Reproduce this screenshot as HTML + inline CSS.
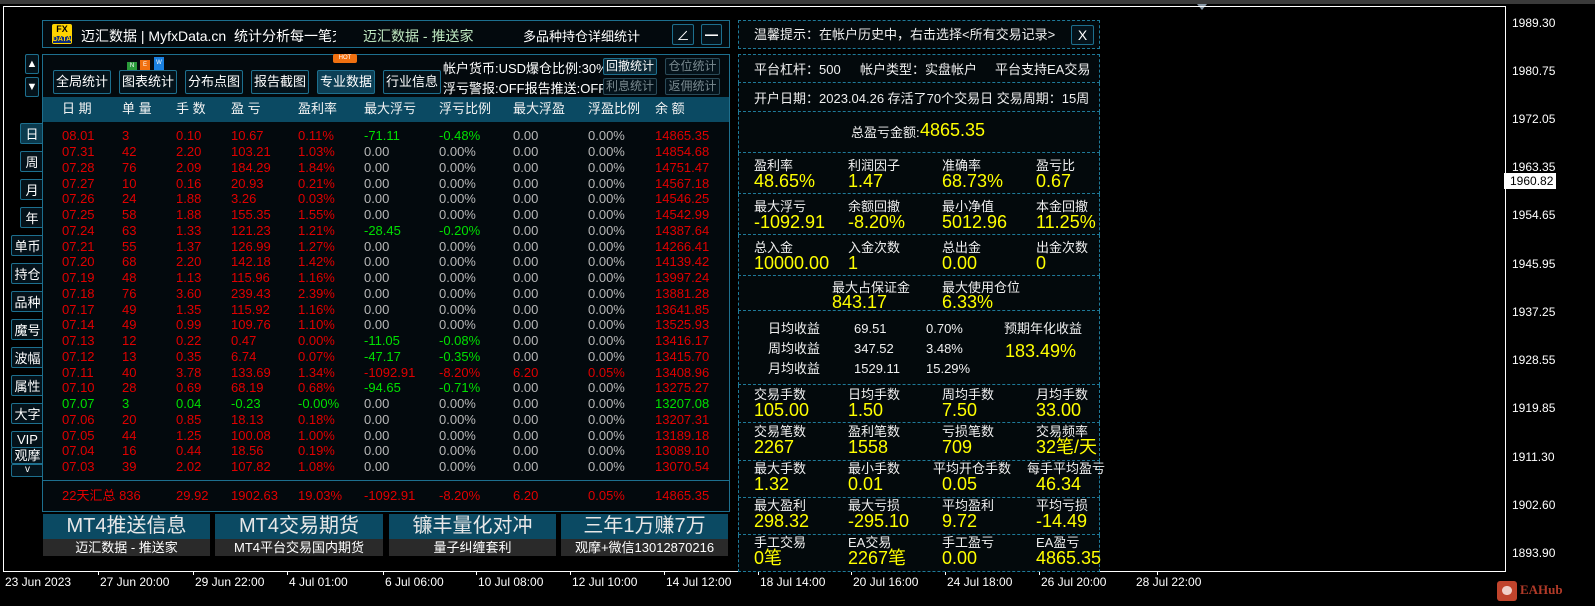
<!DOCTYPE html>
<html><head><meta charset="utf-8">
<style>
*{margin:0;padding:0;box-sizing:border-box}
body{width:1595px;height:606px;background:#000;position:relative;overflow:hidden;font-family:"Liberation Sans","Noto Sans CJK SC",sans-serif;color:#e8e8e8}
.a{position:absolute;white-space:nowrap}
.btn{position:absolute;border:1px solid #1d6f8e;border-radius:2px;background:#04121a;color:#fff;font-size:13px;text-align:center;line-height:21px}
.row{position:absolute;left:43px;width:686px;height:16px;font-size:13px;color:#e00000;line-height:16px}
.row span{position:absolute}
.row span:nth-child(1){left:19px}.row span:nth-child(2){left:79px}.row span:nth-child(3){left:133px}.row span:nth-child(4){left:188px}.row span:nth-child(5){left:255px}.row span:nth-child(6){left:321px}.row span:nth-child(7){left:396px}.row span:nth-child(8){left:470px}.row span:nth-child(9){left:545px}.row span:nth-child(10){left:612px}
.z{color:#b8b8b8}.g{color:#00e000}
.sec{position:absolute;left:738px;width:362px;border:1px dashed #1f7a99;border-top:none;background:#03090c}
.l{position:absolute;font-size:13px;color:#f0f0f0;white-space:nowrap;line-height:15px}
.v{position:absolute;font-size:18px;color:#ffff00;white-space:nowrap;line-height:18px}
.px{position:absolute;left:1512px;font-size:12px;color:#fff}
.tx{position:absolute;top:575px;font-size:12px;color:#fff}
.tk{position:absolute;top:571px;width:1px;height:4px;background:#fff}
</style></head><body>
<div class="a" style="left:0;top:0;width:1595px;height:4px;background:#3a3a3a"></div>
<div class="a" style="left:1197px;top:4px;width:0;height:0;border-left:5px solid transparent;border-right:5px solid transparent;border-top:6px solid #8a9aa8"></div>
<div class="a" style="left:3px;top:6px;width:1503px;height:566px;border:1px solid #fff"></div>

<div class="px" style="top:16px">1989.30</div>
<div class="px" style="top:64px">1980.75</div>
<div class="px" style="top:112px">1972.05</div>
<div class="px" style="top:160px">1963.35</div>
<div class="a" style="left:1504px;top:173px;width:52px;height:16px;background:#fff;color:#000;font-size:12px;padding-left:6px;line-height:16px">1960.82</div>
<div class="px" style="top:208px">1954.65</div>
<div class="px" style="top:257px">1945.95</div>
<div class="px" style="top:305px">1937.25</div>
<div class="px" style="top:353px">1928.55</div>
<div class="px" style="top:401px">1919.85</div>
<div class="px" style="top:450px">1911.30</div>
<div class="px" style="top:498px">1902.60</div>
<div class="px" style="top:546px">1893.90</div>

<div class="tx" style="left:5px">23 Jun 2023</div>
<div class="tk" style="left:98px"></div><div class="tx" style="left:100px">27 Jun 20:00</div>
<div class="tk" style="left:193px"></div><div class="tx" style="left:195px">29 Jun 22:00</div>
<div class="tk" style="left:287px"></div><div class="tx" style="left:289px">4 Jul 01:00</div>
<div class="tk" style="left:383px"></div><div class="tx" style="left:385px">6 Jul 06:00</div>
<div class="tk" style="left:476px"></div><div class="tx" style="left:478px">10 Jul 08:00</div>
<div class="tk" style="left:570px"></div><div class="tx" style="left:572px">12 Jul 10:00</div>
<div class="tk" style="left:664px"></div><div class="tx" style="left:666px">14 Jul 12:00</div>
<div class="tk" style="left:758px"></div><div class="tx" style="left:760px">18 Jul 14:00</div>
<div class="tk" style="left:851px"></div><div class="tx" style="left:853px">20 Jul 16:00</div>
<div class="tk" style="left:945px"></div><div class="tx" style="left:947px">24 Jul 18:00</div>
<div class="tk" style="left:1039px"></div><div class="tx" style="left:1041px">26 Jul 20:00</div>
<div class="tk" style="left:1157px"></div><div class="tx" style="left:1136px">28 Jul 22:00</div>
<div class="a" style="left:1497px;top:581px;width:20px;height:20px;background:#c0442c;border-radius:3px"></div>
<div class="a" style="left:1502px;top:586px;width:10px;height:9px;background:#f0d0c8;border-radius:5px"></div>
<div class="a" style="left:1520px;top:582px;font-size:13px;font-weight:bold;color:#b03a28;font-family:'Liberation Serif',serif">EAHub</div>

<div class="btn" style="left:25px;top:54px;width:14px;height:20px;font-size:11px;line-height:18px">▲</div>
<div class="btn" style="left:25px;top:77px;width:14px;height:20px;font-size:11px;line-height:18px">▼</div>
<div class="btn" style="left:20px;top:123px;width:24px;height:21px;background:#0b3a4e">日</div>
<div class="btn" style="left:20px;top:151px;width:24px;height:21px">周</div>
<div class="btn" style="left:20px;top:179px;width:24px;height:21px">月</div>
<div class="btn" style="left:20px;top:207px;width:24px;height:21px">年</div>
<div class="btn" style="left:11px;top:235px;width:33px;height:21px">单币</div>
<div class="btn" style="left:11px;top:263px;width:33px;height:21px">持仓</div>
<div class="btn" style="left:11px;top:291px;width:33px;height:21px">品种</div>
<div class="btn" style="left:11px;top:319px;width:33px;height:21px">魔号</div>
<div class="btn" style="left:11px;top:347px;width:33px;height:21px">波幅</div>
<div class="btn" style="left:11px;top:375px;width:33px;height:21px">属性</div>
<div class="btn" style="left:11px;top:403px;width:33px;height:21px">大字</div>
<div class="btn" style="left:11px;top:431px;width:33px;height:17px;line-height:15px">VIP</div>
<div class="btn" style="left:11px;top:447px;width:33px;height:17px;line-height:15px">观摩</div>
<div class="btn" style="left:11px;top:464px;width:33px;height:13px;line-height:10px;font-size:10px">v</div>

<div class="a" style="left:42px;top:20px;width:688px;height:28px;border:1px solid #1d6f8e;background:#03090d"></div>
<div class="a" style="left:52px;top:24px;width:20px;height:20px;background:#ffd400;border-radius:2px;color:#000;font-size:9px;font-weight:bold;text-align:center;line-height:9px;padding-top:1px">FX<br><span style="font-size:7px;background:#0a2a80;color:#ffd400">DATA</span></div>
<div class="a" style="left:81px;top:26px;width:255px;overflow:hidden;font-size:14px;color:#fff">迈汇数据 | MyfxData.cn&nbsp; 统计分析每一笔交易</div>
<div class="a" style="left:363px;top:26px;font-size:14px;color:#bfe8c0">迈汇数据 - 推送家</div>
<div class="a" style="left:523px;top:26px;font-size:13px;color:#fff">多品种持仓详细统计</div>
<div class="btn" style="left:672px;top:24px;width:22px;height:21px;font-size:13px">∠</div>
<div class="btn" style="left:701px;top:24px;width:21px;height:21px;font-weight:bold">━</div>

<div class="a" style="left:42px;top:54px;width:688px;height:458px;border:1px solid #1d6f8e;background:#03090d"></div>
<div class="a" style="left:127px;top:62px;width:10px;height:8px;background:#2a9a3a;font-size:6px;color:#fff;text-align:center;line-height:8px">N</div>
<div class="a" style="left:140px;top:60px;width:10px;height:10px;background:#f07010;font-size:6px;color:#fff;text-align:center;line-height:10px">E</div>
<div class="a" style="left:154px;top:57px;width:10px;height:13px;background:#1a80e0;font-size:6px;color:#fff;text-align:center;line-height:13px">W</div>
<div class="a" style="left:333px;top:54px;width:24px;height:9px;background:#f07010;font-size:6px;color:#fff;text-align:center;line-height:9px;border-radius:2px">HOT</div>
<div class="btn" style="left:53px;top:70px;width:58px;height:24px">全局统计</div>
<div class="btn" style="left:119px;top:70px;width:58px;height:24px">图表统计</div>
<div class="btn" style="left:185px;top:70px;width:58px;height:24px">分布点图</div>
<div class="btn" style="left:251px;top:70px;width:58px;height:24px">报告截图</div>
<div class="btn" style="left:317px;top:70px;width:58px;height:24px;background:#0d3f55">专业数据</div>
<div class="btn" style="left:383px;top:70px;width:58px;height:24px">行业信息</div>
<div class="a" style="left:443px;top:58px;font-size:13px;color:#fff">帐户货币:USD爆仓比例:30%</div>
<div class="a" style="left:443px;top:78px;font-size:13px;color:#fff">浮亏警报:OFF报告推送:OFF</div>
<div class="btn" style="left:603px;top:58px;width:54px;height:17px;line-height:15px;font-size:12px;background:#0a2633">回撤统计</div>
<div class="btn" style="left:665px;top:58px;width:55px;height:17px;line-height:15px;font-size:12px;color:#7a8a90;border-color:#2a4a58">仓位统计</div>
<div class="btn" style="left:603px;top:78px;width:54px;height:17px;line-height:15px;font-size:12px;color:#7a8a90;border-color:#2a4a58">利息统计</div>
<div class="btn" style="left:665px;top:78px;width:55px;height:17px;line-height:15px;font-size:12px;color:#7a8a90;border-color:#2a4a58">返佣统计</div>

<div class="a" style="left:43px;top:97px;width:686px;height:25px;background:#0b4a63"></div>
<div class="row" style="top:101px;color:#f4f4f4"><span>日 期</span><span>单 量</span><span>手 数</span><span>盈 亏</span><span>盈利率</span><span>最大浮亏</span><span>浮亏比例</span><span>最大浮盈</span><span>浮盈比例</span><span>余 额</span></div>

<div class="row" style="top:128px"><span>08.01</span><span>3</span><span>0.10</span><span>10.67</span><span>0.11%</span><span class="g">-71.11</span><span class="g">-0.48%</span><span class="z">0.00</span><span class="z">0.00%</span><span>14865.35</span></div>
<div class="row" style="top:144px"><span>07.31</span><span>42</span><span>2.20</span><span>103.21</span><span>1.03%</span><span class="z">0.00</span><span class="z">0.00%</span><span class="z">0.00</span><span class="z">0.00%</span><span>14854.68</span></div>
<div class="row" style="top:160px"><span>07.28</span><span>76</span><span>2.09</span><span>184.29</span><span>1.84%</span><span class="z">0.00</span><span class="z">0.00%</span><span class="z">0.00</span><span class="z">0.00%</span><span>14751.47</span></div>
<div class="row" style="top:176px"><span>07.27</span><span>10</span><span>0.16</span><span>20.93</span><span>0.21%</span><span class="z">0.00</span><span class="z">0.00%</span><span class="z">0.00</span><span class="z">0.00%</span><span>14567.18</span></div>
<div class="row" style="top:191px"><span>07.26</span><span>24</span><span>1.88</span><span>3.26</span><span>0.03%</span><span class="z">0.00</span><span class="z">0.00%</span><span class="z">0.00</span><span class="z">0.00%</span><span>14546.25</span></div>
<div class="row" style="top:207px"><span>07.25</span><span>58</span><span>1.88</span><span>155.35</span><span>1.55%</span><span class="z">0.00</span><span class="z">0.00%</span><span class="z">0.00</span><span class="z">0.00%</span><span>14542.99</span></div>
<div class="row" style="top:223px"><span>07.24</span><span>63</span><span>1.33</span><span>121.23</span><span>1.21%</span><span class="g">-28.45</span><span class="g">-0.20%</span><span class="z">0.00</span><span class="z">0.00%</span><span>14387.64</span></div>
<div class="row" style="top:239px"><span>07.21</span><span>55</span><span>1.37</span><span>126.99</span><span>1.27%</span><span class="z">0.00</span><span class="z">0.00%</span><span class="z">0.00</span><span class="z">0.00%</span><span>14266.41</span></div>
<div class="row" style="top:254px"><span>07.20</span><span>68</span><span>2.20</span><span>142.18</span><span>1.42%</span><span class="z">0.00</span><span class="z">0.00%</span><span class="z">0.00</span><span class="z">0.00%</span><span>14139.42</span></div>
<div class="row" style="top:270px"><span>07.19</span><span>48</span><span>1.13</span><span>115.96</span><span>1.16%</span><span class="z">0.00</span><span class="z">0.00%</span><span class="z">0.00</span><span class="z">0.00%</span><span>13997.24</span></div>
<div class="row" style="top:286px"><span>07.18</span><span>76</span><span>3.60</span><span>239.43</span><span>2.39%</span><span class="z">0.00</span><span class="z">0.00%</span><span class="z">0.00</span><span class="z">0.00%</span><span>13881.28</span></div>
<div class="row" style="top:302px"><span>07.17</span><span>49</span><span>1.35</span><span>115.92</span><span>1.16%</span><span class="z">0.00</span><span class="z">0.00%</span><span class="z">0.00</span><span class="z">0.00%</span><span>13641.85</span></div>
<div class="row" style="top:317px"><span>07.14</span><span>49</span><span>0.99</span><span>109.76</span><span>1.10%</span><span class="z">0.00</span><span class="z">0.00%</span><span class="z">0.00</span><span class="z">0.00%</span><span>13525.93</span></div>
<div class="row" style="top:333px"><span>07.13</span><span>12</span><span>0.22</span><span>0.47</span><span>0.00%</span><span class="g">-11.05</span><span class="g">-0.08%</span><span class="z">0.00</span><span class="z">0.00%</span><span>13416.17</span></div>
<div class="row" style="top:349px"><span>07.12</span><span>13</span><span>0.35</span><span>6.74</span><span>0.07%</span><span class="g">-47.17</span><span class="g">-0.35%</span><span class="z">0.00</span><span class="z">0.00%</span><span>13415.70</span></div>
<div class="row" style="top:365px"><span>07.11</span><span>40</span><span>3.78</span><span>133.69</span><span>1.34%</span><span>-1092.91</span><span>-8.20%</span><span>6.20</span><span>0.05%</span><span>13408.96</span></div>
<div class="row" style="top:380px"><span>07.10</span><span>28</span><span>0.69</span><span>68.19</span><span>0.68%</span><span class="g">-94.65</span><span class="g">-0.71%</span><span class="z">0.00</span><span class="z">0.00%</span><span>13275.27</span></div>
<div class="row g" style="top:396px"><span>07.07</span><span>3</span><span>0.04</span><span>-0.23</span><span>-0.00%</span><span class="z">0.00</span><span class="z">0.00%</span><span class="z">0.00</span><span class="z">0.00%</span><span>13207.08</span></div>
<div class="row" style="top:412px"><span>07.06</span><span>20</span><span>0.85</span><span>18.13</span><span>0.18%</span><span class="z">0.00</span><span class="z">0.00%</span><span class="z">0.00</span><span class="z">0.00%</span><span>13207.31</span></div>
<div class="row" style="top:428px"><span>07.05</span><span>44</span><span>1.25</span><span>100.08</span><span>1.00%</span><span class="z">0.00</span><span class="z">0.00%</span><span class="z">0.00</span><span class="z">0.00%</span><span>13189.18</span></div>
<div class="row" style="top:443px"><span>07.04</span><span>16</span><span>0.44</span><span>18.56</span><span>0.19%</span><span class="z">0.00</span><span class="z">0.00%</span><span class="z">0.00</span><span class="z">0.00%</span><span>13089.10</span></div>
<div class="row" style="top:459px"><span>07.03</span><span>39</span><span>2.02</span><span>107.82</span><span>1.08%</span><span class="z">0.00</span><span class="z">0.00%</span><span class="z">0.00</span><span class="z">0.00%</span><span>13070.54</span></div>
<div class="a" style="left:43px;top:480px;width:686px;height:1px;background:#1d6f8e"></div>
<div class="row" style="top:488px"><span>22天汇总 836</span><span style="left:999px"></span><span>29.92</span><span>1902.63</span><span>19.03%</span><span>-1092.91</span><span>-8.20%</span><span>6.20</span><span>0.05%</span><span>14865.35</span></div>

<div class="a" style="left:43px;top:514px;width:167px;height:25px;background:#0b4a63;color:#e8e8e8;font-size:20px;text-align:center;line-height:25px">MT4推送信息</div>
<div class="a" style="left:215px;top:514px;width:168px;height:25px;background:#0b4a63;color:#e8e8e8;font-size:20px;text-align:center;line-height:25px">MT4交易期货</div>
<div class="a" style="left:389px;top:514px;width:167px;height:25px;background:#0b4a63;color:#e8e8e8;font-size:20px;text-align:center;line-height:25px">镰丰量化对冲</div>
<div class="a" style="left:561px;top:514px;width:167px;height:25px;background:#0b4a63;color:#e8e8e8;font-size:20px;text-align:center;line-height:25px">三年1万赚7万</div>
<div class="a" style="left:43px;top:539px;width:167px;height:17px;background:#2a2a2a;color:#fff;font-size:13px;text-align:center;line-height:17px">迈汇数据 - 推送家</div>
<div class="a" style="left:215px;top:539px;width:168px;height:17px;background:#2a2a2a;color:#fff;font-size:13px;text-align:center;line-height:17px">MT4平台交易国内期货</div>
<div class="a" style="left:389px;top:539px;width:167px;height:17px;background:#2a2a2a;color:#fff;font-size:13px;text-align:center;line-height:17px">量子纠缠套利</div>
<div class="a" style="left:561px;top:539px;width:167px;height:17px;background:#2a2a2a;color:#fff;font-size:13px;text-align:center;line-height:17px">观摩+微信13012870216</div>

<div class="sec" style="top:20px;height:29px;border-top:1px dashed #1f7a99"></div>
<div class="l" style="left:754px;top:27px">温馨提示：在帐户历史中，右击选择&lt;所有交易记录&gt;</div>
<div class="btn" style="left:1071px;top:25px;width:23px;height:20px;line-height:18px;font-size:14px">X</div>
<div class="sec" style="top:54px;height:29px;border-top:1px dashed #1f7a99"></div>
<div class="l" style="left:754px;top:62px">平台杠杆：500</div><div class="l" style="left:860px;top:62px">帐户类型：实盘帐户</div><div class="l" style="left:995px;top:62px">平台支持EA交易</div>
<div class="sec" style="top:83px;height:29px"></div>
<div class="l" style="left:754px;top:91px">开户日期：2023.04.26 存活了70个交易日 交易周期：15周</div>
<div class="sec" style="top:112px;height:41px"></div>
<div class="l" style="left:851px;top:125px">总盈亏金额:</div><div class="v" style="left:920px;top:121px">4865.35</div>
<div class="sec" style="top:153px;height:41px"></div>
<div class="l" style="left:754px;top:158px">盈利率</div><div class="v" style="left:754px;top:172px">48.65%</div>
<div class="l" style="left:848px;top:158px">利润因子</div><div class="v" style="left:848px;top:172px">1.47</div>
<div class="l" style="left:942px;top:158px">准确率</div><div class="v" style="left:942px;top:172px">68.73%</div>
<div class="l" style="left:1036px;top:158px">盈亏比</div><div class="v" style="left:1036px;top:172px">0.67</div>
<div class="sec" style="top:194px;height:41px"></div>
<div class="l" style="left:754px;top:199px">最大浮亏</div><div class="v" style="left:754px;top:213px">-1092.91</div>
<div class="l" style="left:848px;top:199px">余额回撤</div><div class="v" style="left:848px;top:213px">-8.20%</div>
<div class="l" style="left:942px;top:199px">最小净值</div><div class="v" style="left:942px;top:213px">5012.96</div>
<div class="l" style="left:1036px;top:199px">本金回撤</div><div class="v" style="left:1036px;top:213px">11.25%</div>
<div class="sec" style="top:235px;height:41px"></div>
<div class="l" style="left:754px;top:240px">总入金</div><div class="v" style="left:754px;top:254px">10000.00</div>
<div class="l" style="left:848px;top:240px">入金次数</div><div class="v" style="left:848px;top:254px">1</div>
<div class="l" style="left:942px;top:240px">总出金</div><div class="v" style="left:942px;top:254px">0.00</div>
<div class="l" style="left:1036px;top:240px">出金次数</div><div class="v" style="left:1036px;top:254px">0</div>
<div class="sec" style="top:276px;height:35px"></div>
<div class="l" style="left:832px;top:280px">最大占保证金</div><div class="v" style="left:832px;top:293px">843.17</div>
<div class="l" style="left:942px;top:280px">最大使用仓位</div><div class="v" style="left:942px;top:293px">6.33%</div>
<div class="sec" style="top:311px;height:74px"></div>
<div class="l" style="left:768px;top:321px">日均收益</div><div class="l" style="left:854px;top:321px">69.51</div><div class="l" style="left:926px;top:321px">0.70%</div>
<div class="l" style="left:768px;top:341px">周均收益</div><div class="l" style="left:854px;top:341px">347.52</div><div class="l" style="left:926px;top:341px">3.48%</div>
<div class="l" style="left:768px;top:361px">月均收益</div><div class="l" style="left:854px;top:361px">1529.11</div><div class="l" style="left:926px;top:361px">15.29%</div>
<div class="l" style="left:1004px;top:321px">预期年化收益</div><div class="v" style="left:1005px;top:342px">183.49%</div>
<div class="sec" style="top:385px;height:38px"></div>
<div class="l" style="left:754px;top:387px">交易手数</div><div class="v" style="left:754px;top:401px">105.00</div>
<div class="l" style="left:848px;top:387px">日均手数</div><div class="v" style="left:848px;top:401px">1.50</div>
<div class="l" style="left:942px;top:387px">周均手数</div><div class="v" style="left:942px;top:401px">7.50</div>
<div class="l" style="left:1036px;top:387px">月均手数</div><div class="v" style="left:1036px;top:401px">33.00</div>
<div class="sec" style="top:423px;height:38px"></div>
<div class="l" style="left:754px;top:424px">交易笔数</div><div class="v" style="left:754px;top:438px">2267</div>
<div class="l" style="left:848px;top:424px">盈利笔数</div><div class="v" style="left:848px;top:438px">1558</div>
<div class="l" style="left:942px;top:424px">亏损笔数</div><div class="v" style="left:942px;top:438px">709</div>
<div class="l" style="left:1036px;top:424px">交易频率</div><div class="v" style="left:1036px;top:438px">32笔/天</div>
<div class="sec" style="top:461px;height:37px"></div>
<div class="l" style="left:754px;top:461px">最大手数</div><div class="v" style="left:754px;top:475px">1.32</div>
<div class="l" style="left:848px;top:461px">最小手数</div><div class="v" style="left:848px;top:475px">0.01</div>
<div class="l" style="left:933px;top:461px">平均开仓手数</div><div class="v" style="left:942px;top:475px">0.05</div>
<div class="l" style="left:1027px;top:461px">每手平均盈亏</div><div class="v" style="left:1036px;top:475px">46.34</div>
<div class="sec" style="top:498px;height:37px"></div>
<div class="l" style="left:754px;top:498px">最大盈利</div><div class="v" style="left:754px;top:512px">298.32</div>
<div class="l" style="left:848px;top:498px">最大亏损</div><div class="v" style="left:848px;top:512px">-295.10</div>
<div class="l" style="left:942px;top:498px">平均盈利</div><div class="v" style="left:942px;top:512px">9.72</div>
<div class="l" style="left:1036px;top:498px">平均亏损</div><div class="v" style="left:1036px;top:512px">-14.49</div>
<div class="sec" style="top:535px;height:37px"></div>
<div class="l" style="left:754px;top:535px">手工交易</div><div class="v" style="left:754px;top:549px">0笔</div>
<div class="l" style="left:848px;top:535px">EA交易</div><div class="v" style="left:848px;top:549px">2267笔</div>
<div class="l" style="left:942px;top:535px">手工盈亏</div><div class="v" style="left:942px;top:549px">0.00</div>
<div class="l" style="left:1036px;top:535px">EA盈亏</div><div class="v" style="left:1036px;top:549px">4865.35</div>
</body></html>
